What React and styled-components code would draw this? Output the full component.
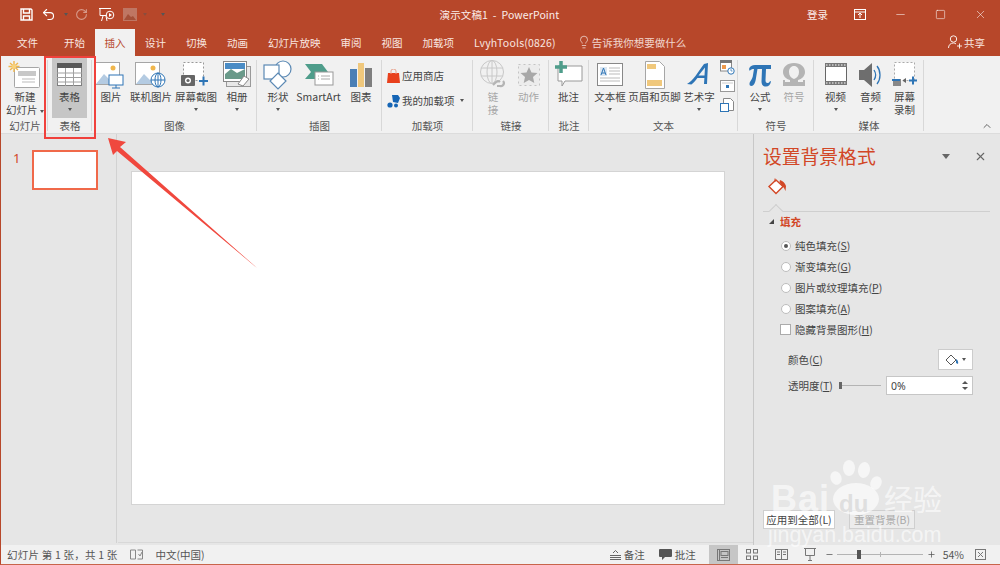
import React from "react";
import styled, { createGlobalStyle } from "styled-components";
import { Undo2, RotateCw, Lightbulb, X, Minus, Square, ChevronUp, Plus } from "lucide-react";

const Global = createGlobalStyle`
  html, body { margin: 0; padding: 0; background: #e6e6e6; overflow: hidden; }
  * { box-sizing: border-box; }
  body { font-family: "Noto Sans CJK SC", "Noto Sans", sans-serif; font-size: 10.5px; color: #444; }
`;
const Root = styled.div`
  position: relative; width: 1000px; height: 565px; overflow: hidden;
  border-left: 1px solid #b7472a; border-bottom: 1px solid #c8644a;
  display: flex; flex-direction: column; background: #e6e6e6;
`;
const TitleBar = styled.div`
  height: 28px; background: #b7472a; color: #fbeeea; display: grid;
  grid-template-columns: 1fr auto 1fr; align-items: center; flex: none;
`;
const Qat = styled.div`display: flex; align-items: center; padding-left: 17px; height: 28px;`;
const QatSlot = styled.span`
  width: ${p => p.$w}px; display: flex; align-items: center; justify-content: center;
  opacity: ${p => p.$dim ? 0.45 : 1};
`;
const DocTitle = styled.div`font-size: 10.5px; letter-spacing: .1px; white-space: pre; transform: translateX(-1px);`;
const WinControls = styled.div`display: flex; justify-content: flex-end; align-items: center; height: 28px;`;
const SignIn = styled.span`margin-right: 12px;`;
const WinBtn = styled.span`width: 40px; display: flex; justify-content: center; align-items: center;`;

const TabBar = styled.div`
  height: 28px; background: #b7472a; display: flex; align-items: stretch; flex: none; color: #f9e6e0; padding-left: 6px;
`;
const Tab = styled.div`
  padding: 0 ${p => p.$pr || 10}px 1px ${p => p.$pl || 10}px; display: flex; align-items: center; white-space: nowrap;
  margin-top: 1px; letter-spacing: ${p => p.$ls || 0}px;
  background: ${p => p.$active ? "#f1f1f1" : "transparent"};
  color: ${p => p.$active ? "#b7472a" : "inherit"};
`;
const TellMe = styled.div`display: flex; align-items: center; gap: 1px; margin-left: 11px; opacity: .9;`;
const Share = styled.div`margin-left: auto; margin-right: 15px; display: flex; align-items: center; gap: 2px;`;

const Ribbon = styled.div`
  height: 78px; background: #f1f1f1; display: flex; position: relative; flex: none;
  border-bottom: 1px solid #dcdcdc; padding-left: 1px;
`;
const Group = styled.div`
  width: ${p => p.$w}px; flex: none; position: relative; display: flex; flex-direction: column; padding-top: 2px;
  &::after { content: ""; position: absolute; right: 0; top: 4px; bottom: 2px; width: 1px; background: #d8d8d8; }
`;
const GroupBody = styled.div`height: ${p => p.$h || 60}px; display: flex; padding-left: ${p => p.$pl || 0}px;`;
const GroupLabel = styled.div`height: 15px; line-height: 15px; text-align: center; color: #555; font-size: 10.5px;`;
const Big = styled.div`
  width: ${p => p.$w}px; flex: none; display: flex; flex-direction: column; align-items: center;
  padding-top: 2px; line-height: 13px; text-align: center; white-space: nowrap;
  background: ${p => p.$active ? "#c6c6c6" : "transparent"};
  color: ${p => p.$off ? "#a6a6a6" : "#444"};
`;
const IconBox = styled.div`height: 30px; width: 100%; display: flex; align-items: center; justify-content: center;`;
const Caret = styled.i`
  display: inline-block; width: 0; height: 0; border: 2.5px solid transparent; border-top: 3px solid #555;
  border-bottom: 0; margin: ${p => p.$m || "5px 0 0"}; vertical-align: middle;
`;
const SmallRows = styled.div`height: 60px; display: flex; flex-direction: column; padding: 5px 0 0 5px;`;
const SmallRow = styled.div`height: 25px; display: flex; align-items: center; gap: 2px;`;
const SmallCol = styled.div`width: 20px; display: flex; flex-direction: column; align-items: center; gap: 5px; padding-top: 2px;`;
const Collapse = styled.div`position: absolute; right: 7px; bottom: 1px; color: #666; display: flex;`;

const Main = styled.div`flex: 1; display: flex; min-height: 0;`;
const Thumbs = styled.div`
  width: 116px; flex: none; border-right: 1px solid #d2d2d2; margin-bottom: 2px; display: flex;
  align-items: flex-start; padding: 16px 0 0 12px; gap: 11.5px;
`;
const ThumbNum = styled.div`color: #d24726; font-size: 13px; line-height: 16px; font-family: "Noto Sans", sans-serif;`;
const Thumb = styled.div`width: 66px; height: 40px; background: #fff; border: 2px solid #f0694a;`;
const Canvas = styled.div`
  flex: 1; padding: 37px 28px 0 13px; border-bottom: 1px solid #d8d8d8; margin-bottom: 2px; margin-left: 1px;
`;
const Slide = styled.div`height: 334px; background: #fff; border: 1px solid #d4d4d4;`;
const Panel = styled.div`
  width: 247px; flex: none; border-left: 1px solid #c8c8c8; background: #e6e6e6;
  padding: 10px 0 16px 9px; display: flex; flex-direction: column;
`;
const PanelHead = styled.div`display: flex; align-items: center; height: 24px; color: #666;`;
const PanelTitle = styled.div`
  font-size: 18.8px; color: #d24726; line-height: 24px; flex: 1; white-space: nowrap;
`;
const PanelChevron = styled.i`
  width: 0; height: 0; border: 4px solid transparent; border-top: 5px solid #666; border-bottom: 0; margin-right: 24px;
`;
const PanelClose = styled.span`display: flex; margin-right: 13px;`;
const PanelTabs = styled.div`
  position: relative; height: 44px; margin-right: 10px; border-bottom: 1px solid #cfcfcf;
  padding: 9px 0 0 4px;
  &::after {
    content: ""; position: absolute; left: 8px; bottom: -5px; width: 9px; height: 9px; background: #e6e6e6;
    border-left: 1px solid #cfcfcf; border-top: 1px solid #cfcfcf; transform: rotate(45deg);
  }
`;
const SectionHead = styled.div`
  display: flex; align-items: center; gap: 6px; height: 14px; margin-top: 2px; padding-left: 6px;
  color: #d24726; font-weight: 700; font-size: 10.5px;
`;
const SectionTri = styled.i`
  width: 0; height: 0; border-bottom: 5px solid #444; border-left: 5px solid transparent; margin-top: 1px;
`;
const Options = styled.div`display: flex; flex-direction: column; margin-top: 7px; padding-left: 18px;`;
const OptRow = styled.label`height: 21px; display: flex; align-items: center; gap: 4px; white-space: nowrap;`;
const Radio = styled.span`
  width: 10px; height: 10px; border-radius: 50%; background: #fff; border: 1px solid #bdbdbd;
  display: flex; align-items: center; justify-content: center; flex: none;
  &::after { content: ""; width: 4px; height: 4px; border-radius: 50%; background: ${p => p.$on ? "#555" : "transparent"}; }
`;
const Check = styled.span`width: 11px; height: 11px; background: #fff; border: 1px solid #ababab; flex: none; margin-left: -1px;`;
const U = styled.u`text-underline-offset: 1px;`;
const FormRow = styled.div`
  display: flex; align-items: center; margin-right: 27px; padding-left: 25px; height: ${p => p.$h}px; white-space: nowrap; 
  margin-top: ${p => p.$mt || 0}px;
`;
const ColorBtn = styled.div`
  margin-left: auto; width: 35px; height: 21px; background: #fff; border: 1px solid #ccc;
  display: flex; align-items: center; justify-content: center; gap: 3px;
`;
const Slider = styled.div`
  width: 42px; height: 1px; background: #b4b4b4; margin-left: 6px; position: relative;
  &::before { content: ""; position: absolute; left: 0; top: -3px; width: 3px; height: 7px; background: #666; }
`;
const Spin = styled.div`
  margin-left: auto; width: 87px; height: 19px; background: #fff; border: 1px solid #c6c6c6; padding-left: 4px;
  display: flex; align-items: center; justify-content: space-between; font-family: "Noto Sans", sans-serif;
`;
const SpinArrows = styled.div`display: flex; flex-direction: column; gap: 3px; padding-right: 4px;`;
const Up = styled.i`width: 0; height: 0; border: 3.5px solid transparent; border-bottom: 3.5px solid #555; border-top: 0;`;
const Down = styled.i`width: 0; height: 0; border: 3.5px solid transparent; border-top: 3.5px solid #555; border-bottom: 0;`;
const PanelFoot = styled.div`margin-top: auto; display: flex; gap: 14px;`;
const FootBtn = styled.div`
  width: ${p => p.$w}px; height: 19px; line-height: 17px; text-align: center; border: 1px solid #cfcfcf; white-space: nowrap;
  background: ${p => p.$off ? "#ececec" : "#fff"}; color: ${p => p.$off ? "#a8a8a8" : "#444"};
`;
const Status = styled.div`
  height: 19px; flex: none; background: #f1f1f1; display: flex; align-items: stretch; color: #555; line-height: 19px;
`;
const StatusText = styled.span`padding-left: ${p => p.$pl || 0}px; white-space: nowrap; display: flex; align-items: center; gap: 3px; letter-spacing: ${p => p.$ls || 0}px;`;
const StatusRight = styled.div`margin-left: auto; display: flex; align-items: center; height: 19px;`;
const ViewBtn = styled.span`
  width: 29px; height: 19px; display: flex; align-items: center; justify-content: center;
  background: ${p => p.$active ? "#c6c6c6" : "transparent"};
`;
const Zoom = styled.div`
  width: 86px; height: 1px; background: #b4b4b4; position: relative; margin: 0 4px 0 3px;
  &::before { content: ""; position: absolute; left: 20px; top: -4px; width: 4px; height: 9px; background: #555; }
  &::after { content: ""; position: absolute; left: 43px; top: -2px; width: 1px; height: 5px; background: #b4b4b4; }
`;
const RedBox = styled.div`
  position: absolute; left: 43px; top: 56px; width: 52px; height: 83px; border: 2px solid #f0413c; pointer-events: none;
`;
const ArrowSvg = styled.svg`position: absolute; left: 0; top: 0; pointer-events: none;`;
const Watermark = styled.div`position: absolute; left: 760px; top: 455px; width: 200px; height: 95px; color: rgba(255,255,255,.62); pointer-events: none;`;
const PawSvg = styled.svg`position: absolute; left: 52px; top: 2px;`;
const WmBai = styled.div`position: absolute; left: 10px; top: 19px; font: 700 36px/50px "Liberation Sans", sans-serif; letter-spacing: 1px;`;
const WmDu = styled.div`position: absolute; left: 78px; top: 36px; font: 700 24px/26px "Liberation Sans", sans-serif; color: #dfdfdf;`;
const WmCn = styled.div`position: absolute; left: 123px; top: 24px; font: 400 29px/38px "Noto Sans CJK SC", sans-serif; white-space: nowrap;`;
const WmUrl = styled.div`position: absolute; left: 7px; top: 67px; font: 400 21.5px/26px "Liberation Sans", sans-serif; white-space: nowrap;`;

const Blue = "#2e75b6";
const Pic = ({ children }) => (
  <svg width="34" height="30" viewBox="0 0 34 30">
    <rect x="1.5" y="2.5" width="24" height="22" fill="#fff" stroke="#a6a6a6" />
    <circle cx="19" cy="8" r="2.5" fill="#f0b64c" />
    <path d="M2 24l8-10 6 6 3-2 5 6z" fill="#b4cbe2" />
    {children}
  </svg>
);
const NewSlide = () => (
  <svg width="36" height="30" viewBox="0 0 36 30">
    <rect x="7.5" y="7.5" width="25" height="20" rx="1" fill="#fff" stroke="#a6a6a6" />
    <rect x="11" y="11" width="18" height="5" fill="#c8c8c8" />
    <path d="M15 19h13M15 22h13" stroke="#bbb" />
    <path d="M7 1v11M1.5 6.5h11M3 3l8 7M11 3l-8 7" stroke="#f0b64c" strokeWidth="1.4" />
    <circle cx="7" cy="6.5" r="2.2" fill="#f8d27a" />
  </svg>
);
const TableIco = () => (
  <svg width="26" height="24" viewBox="0 0 26 24">
    <rect x=".5" y=".5" width="24" height="22" fill="#fff" stroke="#7f7f7f" />
    <rect x="0" y="0" width="25" height="5" fill="#595959" />
    <path d="M0 10h25M0 14.5h25M0 19h25M8.5 5v18M16.5 5v18" stroke="#a0a0a0" />
  </svg>
);
const Shot = () => (
  <svg width="34" height="30" viewBox="0 0 34 30">
    <rect x="4.5" y="2.5" width="20" height="18" fill="#fff" stroke="#999" strokeDasharray="2 2" />
    <rect x="2" y="15" width="14" height="11" rx="1" fill="#666" />
    <circle cx="9" cy="20.5" r="3" fill="#fff" /><circle cx="9" cy="20.5" r="1.6" fill="#666" />
    <path d="M20 21h9M24.5 16.5v9" stroke={Blue} strokeWidth="2" />
  </svg>
);
const Album = () => (
  <svg width="28" height="28" viewBox="0 0 28 28">
    <rect x="3.5" y="5.5" width="24" height="20" fill="#e8e8e8" stroke="#999" />
    <rect x=".5" y=".5" width="23" height="20" fill="#fff" stroke="#888" />
    <rect x="2" y="2" width="20" height="6" fill="#4a8cc5" />
    <path d="M2 13l6-5 6 4 8-4v10H2z" fill="#6a9a8a" />
    <path d="M15 23l6-8 5 3-6 7z" fill="#fff" stroke="#888" />
  </svg>
);
const Shapes = () => (
  <svg width="30" height="30" viewBox="0 0 30 30" fill="#fff" stroke="#5b89b4" strokeWidth="1.2">
    <circle cx="20" cy="9" r="8" />
    <rect x="1" y="5" width="15" height="14" />
    <path d="M15 13l8 8-8 8-8-8z" />
  </svg>
);
const SmartArt = () => (
  <svg width="30" height="28" viewBox="0 0 30 28">
    <path d="M1 3h17l6 8-6 7H1l6-7z" fill="#4f9d8b" />
    <rect x="11" y="11" width="18" height="13" fill="#fff" stroke="#999" />
    <path d="M17 15h9M17 18h9M14 15h1M14 18h1" stroke="#aaa" />
  </svg>
);
const Chart = () => (
  <svg width="24" height="24" viewBox="0 0 24 24">
    <rect x="1" y="6" width="7" height="18" fill="#4a7fb5" />
    <rect x="9" y="0" width="6" height="24" fill="#f0c87c" />
    <rect x="16" y="5" width="7" height="19" fill="#7f7f7f" />
  </svg>
);
const Store = () => (
  <svg width="13" height="14" viewBox="0 0 13 14">
    <path d="M1 4h11l1 10H0z" fill="#e8401c" /><path d="M4 5V2a2.5 2 0 015 0v3" fill="none" stroke="#e8a08c" />
  </svg>
);
const Addin = () => (
  <svg width="13" height="14" viewBox="0 0 13 14" fill="#1565b5">
    <path d="M5 1l6 0 2 3-2 5-5-1z" /><circle cx="3" cy="11" r="2.6" />
    <circle cx="9" cy="11.5" r="2" />
  </svg>
);
const LinkIco = () => (
  <svg width="28" height="30" viewBox="0 0 28 30" fill="none" stroke="#c8c8c8">
    <circle cx="13" cy="12" r="11.5" /><ellipse cx="13" cy="12" rx="5" ry="11.5" />
    <path d="M2 8h22M2 16h22M13 0v24" />
    <path d="M14 25l3-3a3 3 0 014 0M18 26l3 0a3 3 0 003-5" stroke="#b4b4b4" strokeWidth="2.2" />
  </svg>
);
const ActionIco = () => (
  <svg width="24" height="24" viewBox="0 0 24 24">
    <rect x="1.5" y="1.5" width="21" height="21" fill="#ececec" stroke="#c4c4c4" strokeDasharray="2 3" />
    <path d="M12 4l2.5 5.5 6 .6-4.5 4 1.3 6L12 17l-5.3 3.100 1.300-6-4.500-4 6-.6z" fill="#a8a8a8" />
  </svg>
);
const CommentIco = () => (
  <svg width="28" height="28" viewBox="0 0 28 28">
    <path d="M3 5h24v15H10l-3 5v-5H3z" fill="#fff" stroke="#999" />
    <path d="M0 6h12M6 0v12" stroke="#4f9d8b" strokeWidth="3.500" />
  </svg>
);
const TextBox = () => (
  <svg width="26" height="24" viewBox="0 0 26 24">
    <rect x=".5" y=".5" width="25" height="22" fill="#fff" stroke="#888" />
    <rect x="3" y="4" width="7" height="9" fill="#dbe6f1" />
    <path d="M4 12l2.500-7 2.500 7M5 10h3" stroke={Blue} fill="none" />
    <path d="M12 5h11M12 8h11M12 11h11M3 15h20M3 18h20" stroke="#bbb" />
  </svg>
);
const HeaderFooter = () => (
  <svg width="20" height="28" viewBox="0 0 20 28">
    <path d="M.5.5h14l5 5v22H.5z" fill="#fff" stroke="#a6a6a6" />
    <rect x="2" y="3" width="9" height="5" fill="#f0c87c" /><rect x="2" y="19" width="15" height="6" fill="#f0c87c" />
  </svg>
);
const WordArt = () => (
  <svg width="28" height="28" viewBox="0 0 28 28">
    <path d="M2 23c6-3 11-12 17-20l4-1-1 21h-3l.4-6h-7c-2 3-4 5-6 6.500zM13.500 14.500h6l.5-8z" fill={Blue} fillRule="evenodd" />
  </svg>
);
const DateIco = () => (
  <svg width="15" height="15" viewBox="0 0 15 15">
    <rect x=".5" y="1" width="11" height="10" fill="#fff" stroke="#888" />
    <rect x="0" y="0" width="12" height="3" fill="#777" /><rect x="2" y="5" width="4" height="4" fill="#ee9a4d" />
    <circle cx="11" cy="11" r="3.200" fill="#fff" stroke={Blue} /><path d="M11 9v2h1.500" stroke={Blue} fill="none" strokeWidth=".7" />
  </svg>
);
const NumIco = () => (
  <svg width="15" height="13" viewBox="0 0 15 13">
    <rect x=".5" y=".5" width="14" height="11" fill="#fff" stroke="#999" />
    <path d="M2 3h11" stroke="#ccc" />
    <rect x="6" y="5" width="3" height="3" fill={Blue} />
  </svg>
);
const ObjIco = () => (
  <svg width="14" height="15" viewBox="0 0 14 15">
    <path d="M3.500.5h7l3 3v9h-10z" fill="#fff" stroke="#888" />
    <rect x=".5" y="5.500" width="8" height="8" fill="#fff" stroke={Blue} />
  </svg>
);
const PiIco = () => (
  <svg width="24" height="24" viewBox="0 0 24 24">
    <path d="M1 6c1-3 3-4 6-4h16v4h-5l-.5 11c0 2 .5 3 2 3 1 0 2-.5 2.500-2l1 .5c-.5 3-2.500 5-5 5-3 0-4.500-2-4.500-5L14 6H9.500l-1.500 9c-.5 4-2 8-4.500 8C2 23 1.500 22 1.500 21c0-3 3-4 3.500-9L6 6C4 6 2.500 6.500 1.800 8z" fill={Blue} />
  </svg>
);
const Omega = () => (
  <svg width="24" height="24" viewBox="0 0 24 24">
    <path d="M1 23v-6h2v2h5v-2c-4-1-7-4-7-8 0-5 4-9 11-9s11 4 11 9c0 4-3 7-7 8v2h5v-2h2v6h-11v-7c3-1 5-3.500 5-7 0-3.500-2-6-5-6s-5 2.500-5 6c0 3.500 2 6 5 7v7z" fill="#b4b4b4" />
  </svg>
);
const Video = () => (
  <svg width="22" height="24" viewBox="0 0 22 24">
    <rect x=".5" y=".5" width="21" height="21" fill="#fff" stroke="#666" />
    <rect x="0" y="0" width="22" height="4" fill="#777" /><rect x="0" y="18" width="22" height="4" fill="#777" />
    <path d="M1 2h20M1 20h20" stroke="#fff" strokeDasharray="1.500 1.500" />
  </svg>
);
const Audio = () => (
  <svg width="24" height="26" viewBox="0 0 24 26">
    <path d="M0 8h5l8-7v24l-8-7H0z" fill="#6e6e6e" />
    <path d="M15 8c2 3 2 7 0 10M18 4c4 5 4 13 0 18" fill="none" stroke={Blue} strokeWidth="1.300" />
  </svg>
);
const Record = () => (
  <svg width="26" height="28" viewBox="0 0 26 28">
    <rect x="2.500" y="1.500" width="20" height="18" fill="#fff" stroke="#aaa" strokeDasharray="2 2" />
    <rect x="1" y="18" width="8" height="7" fill="#888" />
    <path d="M0 19h8" stroke={Blue} strokeWidth="2" />
    <path d="M11 19l3-2v5l-3-2z" fill="#666" />
    <path d="M17 19.500h8M21 15.500v8" stroke={Blue} strokeWidth="2" />
  </svg>
);
const Bucket = () => (
  <svg width="20" height="20" viewBox="0 0 20 20">
    <path d="M9 3l7 6.500-7 7-7-7z" fill="#fff" stroke="#d24726" strokeWidth="1.400" />
    <path d="M8 5V1.500" stroke="#d24726" />
    <path d="M13 3c3 1 5 3 6 6l-.5 5-1.500-3-2.500-3-2-3z" fill="#d24726" />
  </svg>
);
const ColorBucket = () => (
  <svg width="14" height="14" viewBox="0 0 14 14">
    <path d="M6 2l5 5-5 5-5-5z" fill="#fff" stroke="#555" />
    <path d="M11 6c2 1 2.500 3 2 5l-2-1z" fill={Blue} />
  </svg>
);
const Save = () => (
  <svg width="13" height="13" viewBox="0 0 13 13" fill="none" stroke="#fff" strokeWidth="1.400">
    <path d="M1 1h10l1 1v10H1z" /><path d="M3.500 1v4h6V1M3.500 12V8h6v4" />
  </svg>
);
const Present = () => (
  <svg width="17" height="15" viewBox="0 0 17 15" fill="none" stroke="#fff">
    <path d="M1 1.500h12M2 1.500v7h9" /><path d="M5 9l-1.500 5M8 9l1 5" />
    <circle cx="12" cy="8" r="3.800" fill="#b7472a" /><path d="M11 6l3 2-3 2z" fill="#fff" stroke="none" />
  </svg>
);
const ImgQ = () => (
  <svg width="14" height="13" viewBox="0 0 14 13"><rect width="14" height="13" fill="#c9b0a8" /><path d="M1 12l4-6 3 3 2-1 3 4z" fill="#8f5a4a" /></svg>
);
const WinBox = () => (
  <svg width="12" height="11" viewBox="0 0 12 11" fill="none" stroke="#fff">
    <rect x=".5" y=".5" width="11" height="10" /><path d="M.5 3h11M6 9V4.500M4 6l2-2 2 2" />
  </svg>
);
const UserPlus = () => (
  <svg width="14" height="14" viewBox="0 0 14 14" fill="none" stroke="#fbeeea">
    <circle cx="5.500" cy="4" r="3.200" /><path d="M.5 13c0-3 2-5 5-5 1 0 2 .3 2.500 1M9 11h5M11.500 8.500v5" />
  </svg>
);
const NotesIco = () => (
  <svg width="11" height="10" viewBox="0 0 11 10" stroke="#666"><path d="M3 3l2.500-2.500L8 3M0 5.500h11M0 7.500h11M0 9.500h11" fill="none" /></svg>
);
const NormalView = () => (
  <svg width="13" height="12" viewBox="0 0 13 12" fill="none" stroke="#777"><rect x=".5" y=".5" width="12" height="11" /><rect x="4" y="2.500" width="7" height="4" /><path d="M2.500 1v10M4 8.500h7" /></svg>
);
const GridView = () => (
  <svg width="12" height="11" viewBox="0 0 12 11" fill="none" stroke="#777"><rect x=".5" y=".5" width="4" height="3.500" /><rect x="7.500" y=".5" width="4" height="3.500" /><rect x=".5" y="7" width="4" height="3.500" /><rect x="7.500" y="7" width="4" height="3.500" /></svg>
);
const ReadView = () => (
  <svg width="13" height="11" viewBox="0 0 13 11" fill="none" stroke="#777"><rect x=".5" y=".5" width="12" height="10" /><path d="M6.500 .5v10M2 3h3M2 5.500h3M8 3h3M8 5.500h3" /></svg>
);
const ShowView = () => (
  <svg width="12" height="13" viewBox="0 0 12 13" fill="none" stroke="#777"><path d="M0 .5h12M1.500.5v7h9v-7M6 7.500v5M4 12.500h4" /></svg>
);
const Fit = () => (
  <svg width="11" height="11" viewBox="0 0 11 11" fill="none" stroke="#777"><rect x=".5" y=".5" width="10" height="10" /><path d="M3 3l5 5M8 3L3 8" /></svg>
);
const SpellIco = () => (
  <svg width="13" height="11" viewBox="0 0 13 11" fill="none" stroke="#888"><path d="M.5 1h5v9h-5zM7.500 1h5v9h-5M8.500 5l1.500 2 2-4" /></svg>
);
const CommentSolid = () => (
  <svg width="13" height="12" viewBox="0 0 13 12"><path d="M1 0h11a1 1 0 011 1v6a1 1 0 01-1 1H6l-3 3V8H1a1 1 0 01-1-1V1a1 1 0 011-1z" fill="#555" /></svg>
);

const B = ({ w, active, off, icon, lines, caret }) => (
  <Big $w={w} $active={active} $off={off}>
    <IconBox>{icon}</IconBox>
    {lines.map((l, i) => <span key={i}>{l}</span>)}
    {caret && <Caret />}
  </Big>
);

export default function App() {
  return (
    <Root>
      <Global />
      <TitleBar>
        <Qat>
          <QatSlot $w={17}><Save /></QatSlot>
          <QatSlot $w={27}><Undo2 size={15} color="#fff" strokeWidth={1.8} /></QatSlot>
          <QatSlot $w={8}><Caret $m="0" /></QatSlot>
          <QatSlot $w={22} $dim><RotateCw size={13} color="#fff" /></QatSlot>
          <QatSlot $w={28}><Present /></QatSlot>
          <QatSlot $w={20} $dim><ImgQ /></QatSlot>
          <QatSlot $w={10} $dim><Caret $m="0" /></QatSlot>
          <QatSlot $w={25}><Caret $m="0" /></QatSlot>
        </Qat>
        <DocTitle>演示文稿1  -  PowerPoint</DocTitle>
        <WinControls>
          <SignIn>登录</SignIn>
          <WinBtn><WinBox /></WinBtn>
          <WinBtn><Minus size={13} strokeWidth={1} color="#fff" /></WinBtn>
          <WinBtn><Square size={11} strokeWidth={1.2} color="#fff" /></WinBtn>
          <WinBtn><X size={13} strokeWidth={1} color="#fff" /></WinBtn>
        </WinControls>
      </TitleBar>
      <TabBar>
        <Tab>文件</Tab>
        <Tab $pl={16}>开始</Tab>
        <Tab $active $pl={9.5} $pr={9.5}>插入</Tab>
        <Tab>设计</Tab>
        <Tab>切换</Tab>
        <Tab>动画</Tab>
        <Tab>幻灯片放映</Tab>
        <Tab>审阅</Tab>
        <Tab>视图</Tab>
        <Tab>加载项</Tab>
        <Tab $ls={0.2}>LvyhTools(0826)</Tab>
        <TellMe><Lightbulb size={14} strokeWidth={1.2} color="#fff" />告诉我你想要做什么</TellMe>
        <Share><UserPlus />共享</Share>
      </TabBar>
      <Ribbon>
        <Group $w={46}><GroupBody $pl={3}>
          <B w={40} icon={<NewSlide />} lines={["新建", <>幻灯片 <Caret $m="0" /></>]} /></GroupBody>
          <GroupLabel>幻灯片</GroupLabel></Group>
        <Group $w={44}><GroupBody $pl={4}>
          <B w={35} active icon={<TableIco />} lines={["表格"]} caret /></GroupBody>
          <GroupLabel>表格</GroupLabel></Group>
        <Group $w={165}><GroupBody $pl={1}>
          <B w={36} icon={<Pic><rect x="15" y="15" width="14" height="10" fill="#fff" stroke={Blue} /><path d="M22 25v3M18 28h8" stroke={Blue} /></Pic>} lines={["图片"]} />
          <B w={44} icon={<Pic><circle cx="24" cy="20" r="7" fill="#fff" stroke={Blue} /><path d="M17 20h14M24 13v14" stroke={Blue} /><ellipse cx="24" cy="20" rx="3" ry="7" fill="none" stroke={Blue} /></Pic>} lines={["联机图片"]} />
          <B w={46} icon={<Shot />} lines={["屏幕截图"]} caret />
          <B w={36} icon={<Album />} lines={["相册"]} caret /></GroupBody>
          <GroupLabel>图像</GroupLabel></Group>
        <Group $w={125}><GroupBody $pl={3}>
          <B w={36} icon={<Shapes />} lines={["形状"]} caret />
          <B w={45} icon={<SmartArt />} lines={["SmartArt"]} />
          <B w={40} icon={<Chart />} lines={["图表"]} /></GroupBody>
          <GroupLabel>插图</GroupLabel></Group>
        <Group $w={91}><SmallRows>
          <SmallRow><Store />应用商店</SmallRow>
          <SmallRow><Addin />我的加载项<Caret $m="0 0 0 3px" /></SmallRow></SmallRows>
          <GroupLabel>加载项</GroupLabel>
        </Group>
        <Group $w={76}><GroupBody $pl={2}>
          <B w={36} off icon={<LinkIco />} lines={["链", "接"]} />
          <B w={35} off icon={<ActionIco />} lines={["动作"]} /></GroupBody>
          <GroupLabel>链接</GroupLabel></Group>
        <Group $w={40}><GroupBody>
          <B w={39} icon={<CommentIco />} lines={["批注"]} /></GroupBody>
          <GroupLabel>批注</GroupLabel></Group>
        <Group $w={149}><GroupBody $pl={3}>
          <B w={36} icon={<TextBox />} lines={["文本框"]} caret />
          <B w={53} icon={<HeaderFooter />} lines={["页眉和页脚"]} />
          <B w={36} icon={<WordArt />} lines={["艺术字"]} caret />
          <SmallCol><DateIco /><NumIco /><ObjIco /></SmallCol></GroupBody>
          <GroupLabel>文本</GroupLabel></Group>
        <Group $w={76}><GroupBody $pl={5}>
          <B w={34} icon={<PiIco />} lines={["公式"]} caret />
          <B w={34} off icon={<Omega />} lines={["符号"]} /></GroupBody>
          <GroupLabel>符号</GroupLabel></Group>
        <Group $w={110}><GroupBody $pl={4}>
          <B w={35} icon={<Video />} lines={["视频"]} caret />
          <B w={35} icon={<Audio />} lines={["音频"]} caret />
          <B w={33} icon={<Record />} lines={["屏幕", "录制"]} /></GroupBody>
          <GroupLabel>媒体</GroupLabel></Group>
        <Collapse><ChevronUp size={12} /></Collapse>
      </Ribbon>
      <Main>
        <Thumbs><ThumbNum>1</ThumbNum><Thumb /></Thumbs>
        <Canvas><Slide /></Canvas>
        <Panel>
          <PanelHead>
            <PanelTitle>设置背景格式</PanelTitle>
            <PanelChevron />
            <PanelClose><X size={13} /></PanelClose>
          </PanelHead>
          <PanelTabs><Bucket /></PanelTabs>
          <SectionHead><SectionTri />填充</SectionHead>
          <Options>
            <OptRow><Radio $on /><span>纯色填充(<U>S</U>)</span></OptRow>
            <OptRow><Radio /><span>渐变填充(<U>G</U>)</span></OptRow>
            <OptRow><Radio /><span>图片或纹理填充(<U>P</U>)</span></OptRow>
            <OptRow><Radio /><span>图案填充(<U>A</U>)</span></OptRow>
            <OptRow><Check /><span>隐藏背景图形(<U>H</U>)</span></OptRow>
          </Options>
          <FormRow $h={21} $mt={9}><span>颜色(<U>C</U>)</span><ColorBtn><ColorBucket /><Caret $m="0" /></ColorBtn></FormRow>
          <FormRow $h={19} $mt={6}><span>透明度(<U>T</U>)</span><Slider /><Spin>0%<SpinArrows><Up /><Down /></SpinArrows></Spin></FormRow>
          <PanelFoot>
            <FootBtn $w={72}>应用到全部(L)</FootBtn>
            <FootBtn $w={66} $off>重置背景(B)</FootBtn>
          </PanelFoot>
        </Panel>
      </Main>
      <Status>
        <StatusText $pl={6} $ls={0.2}>幻灯片 第 1 张，共 1 张</StatusText>
        <StatusText $pl={13}><SpellIco /></StatusText>
        <StatusText $pl={12}>中文(中国)</StatusText>
        <StatusRight>
          <StatusText><NotesIco />备注</StatusText>
          <StatusText $pl={14}><CommentSolid />批注</StatusText>
          <StatusText $pl={13} />
          <ViewBtn $active><NormalView /></ViewBtn>
          <ViewBtn><GridView /></ViewBtn>
          <ViewBtn><ReadView /></ViewBtn>
          <ViewBtn><ShowView /></ViewBtn>
          <Minus size={9} color="#555" />
          <Zoom />
          <Plus size={9} color="#555" />
          <StatusText $pl={7}>54%</StatusText>
          <StatusText $pl={11}><Fit /></StatusText>
          <StatusText $pl={14} />
        </StatusRight>
      </Status>
      <RedBox />
      <ArrowSvg width="1000" height="565" viewBox="0 0 1000 565">
        <polygon points="107,138 125,142 119,147 256,268 116,151 112,155" fill="#f0483e" />
      </ArrowSvg>
      <Watermark>
        <PawSvg width="70" height="70" viewBox="0 0 70 70" fill="rgba(255,255,255,.62)">
          <ellipse cx="23" cy="21" rx="5.500" ry="7" transform="rotate(-20 23 21)" />
          <ellipse cx="36" cy="11" rx="6" ry="8" />
          <ellipse cx="51" cy="13" rx="6" ry="8" transform="rotate(10 51 13)" />
          <ellipse cx="63" cy="26" rx="5.500" ry="7" transform="rotate(25 63 26)" />
          <ellipse cx="43" cy="42" rx="23" ry="16" />
        </PawSvg>
        <WmBai>Bai</WmBai>
        <WmDu>du</WmDu>
        <WmCn>经验</WmCn>
        <WmUrl>jingyan.baidu.com</WmUrl>
      </Watermark>
    </Root>
  );
}
